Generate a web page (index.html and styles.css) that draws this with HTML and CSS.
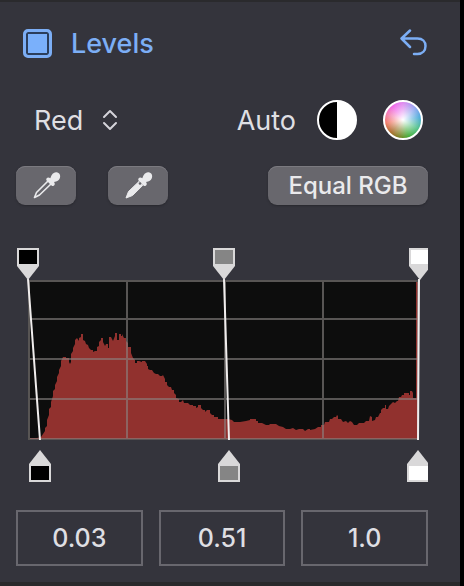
FILE: index.html
```
<!DOCTYPE html>
<html lang="en">
<head>
<meta charset="utf-8">
<title>Levels</title>
<link rel="stylesheet" href="styles.css">
</head>
<body>
<main class="panel">
  <header class="header">
    <label class="title"><input class="check" type="checkbox" checked>Levels</label>
    <button class="icon-button" type="button" aria-label="Reset">
      <svg width="28" height="28" viewBox="0 0 28 28" fill="none" stroke="#7caef5" stroke-width="2.5" stroke-linecap="round" stroke-linejoin="round"><path d="M10 1.500 1.500 9.500 10 18M2 9.500H17.500C22.500 9.500 25.500 12.500 25.500 17S22.500 25 17.500 25H14"/></svg>
    </button>
  </header>

  <div class="row channel-row">
    <div class="channel">
      <select class="channel-select" aria-label="Channel"><option>Red</option><option>Green</option><option>Blue</option></select>
      <svg class="chevrons" width="16" height="22" viewBox="0 0 16 22" fill="none" stroke="#d5d4da" stroke-width="2" stroke-linecap="round" stroke-linejoin="round"><path d="M2 8 8 2l6 6M2 14l6 6 6-6"/></svg>
    </div>
    <div class="auto">
      <span class="auto-label">Auto</span>
      <button class="disc contrast" type="button" aria-label="Auto contrast"></button>
      <button class="disc color" type="button" aria-label="Auto color"></button>
    </div>
  </div>

  <div class="row tools">
    <div class="pickers">
      <button class="button picker" type="button" aria-label="Pick black point">
        <svg width="30" height="30" viewBox="0 0 30 30"><path d="M17.500 9.500 5.500 21.500 3.500 26.500 8.500 24 20.500 12.500" fill="none" stroke="#eaeaec" stroke-width="1.600" stroke-linejoin="round"/><path d="M15.500 7.500c1-1.500 2.500-1.200 3.800-.3C20.500 3 23 .8 25.500 1.200c3 .3 4.500 3.300 3.300 6-.9 2.200-2.600 3-5.800 3.800 1 1.300 1.200 2.700-.3 3.700-1.200.8-2.200-.2-3-1l-3.200-3.200c-.9-.8-1.700-1.800-1-3z" fill="#eaeaec"/></svg>
      </button>
      <button class="button picker" type="button" aria-label="Pick white point">
        <svg width="30" height="30" viewBox="0 0 30 30"><path d="M16 10.500 5.500 20.500 3 27 9.500 24.500 19.800 14.300z" fill="#eaeaec" stroke="#eaeaec" stroke-linejoin="round"/><path d="M15.500 7.500c1-1.500 2.500-1.200 3.800-.3C20.500 3 23 .8 25.500 1.200c3 .3 4.500 3.300 3.300 6-.9 2.200-2.600 3-5.800 3.800 1 1.300 1.200 2.700-.3 3.700-1.200.8-2.200-.2-3-1l-3.200-3.200c-.9-.8-1.700-1.800-1-3z" fill="#eaeaec"/><circle cx="17" cy="12.500" r="1.300" fill="#66656b"/></svg>
      </button>
    </div>
    <button class="button equal" type="button">Equal RGB</button>
  </div>

  <svg class="histogram" viewBox="16 248 412 235" role="img" aria-label="Red channel histogram">
    <path fill="#0d0d0d" d="M28 280h391v160H28z"/>
    <path fill="#91312e" d="M30 439V438H37L41 437 43 434 45 431V428L47 426V420L49 415V409L51 407V402L53 396V391L55 389V385L57 381V377L59 373V370L61 366V361L63 357H66V358H69V362L70 364 71 362V354L73 351V348L75 344V340L77 338 79 341V338L81 337V334H83V340L85 341 86 344 88 345 89 348 91 350H93V352L95 351H97V347L99 346V342L101 340V338H103V342L105 346 106 344H108V348H109V337H111L113 341 115 336V333H117V340H119V334H121V336H122V334L124 338H126V341L128 343V347H131V353L133 358 135 360V363H137V361H139L142 362V361H145L147 364V366H148V369L150 370H152L154 373 156 374H158L160 376H162L163 375 165 379V382H167V385L169 387H171L172 390H174V393L176 395V398L179 399V402H181L183 400 184 403H188L190 405H193V406H196V408L198 407V405H201V408L203 410H205V412L207 410H210V413L212 415H214V417H218V419H228L232 420 234 422H240L246 421 250 420V419H256V421H258V423H262L266 425H269L270 424H276L279 426 283 427 286 429H290L293 428 296 430 299 429H303L305 431 308 429H310V430L315 429 318 427H321V425H324L325 422H329L330 419H332L334 417H336L337 415 338 416V419H341L343 422 346 421 348 423 350 421 352 422 354 425H357L359 423H364L366 421H369L370 416 372 417V421L375 420 376 417H378L380 413H381V410L383 408H385V405H386V409H388L389 406 393 402 395 403 397 401H398L399 397H401L402 395H404V393H409V395H410V391H412L413 393V398H416V282H419V439z"/>
    <path fill="none" stroke="#8b8583" stroke-opacity=".6" stroke-width="2" d="M29 440V281H418M127 281V439M225 281V439M323 281V439M418 281V439M29 319H418M29 359H418M29 399H418M28 439H419"/>
    <path fill="none" stroke="#f0eded" stroke-width="2" d="M28 279 40 440M224 279 229 440M419 279 418 440"/>
    <g fill="#d9d8d9">
      <path d="M17 248H39V266L28 280 17 266z"/><path d="M213 248H235V266L224 280 213 266z"/><path d="M409 248H431V266L420 280 409 266z"/>
      <path d="M29 482V464L40 450 51 464V482z"/><path d="M218 482V464L229 450 240 464V482z"/><path d="M407 482V464L418 450 429 464V482z"/>
    </g>
    <path fill="#000" d="M19 250h18v14H19zM31 466h18v14H31z"/>
    <path fill="#858585" d="M215 250h18v14h-18zM220 466h18v14h-18z"/>
    <path fill="#fff" d="M411 250h18v14h-18zM409 466h20v14h-20z"/>
  </svg>

  <div class="values">
    <input class="value" type="text" value="0.03" aria-label="Black point">
    <input class="value" type="text" value="0.51" aria-label="Midpoint">
    <input class="value" type="text" value="1.0" aria-label="White point">
  </div>
</main>
</body>
</html>
```
FILE: styles.css
```
* {
  box-sizing: border-box;
}

body {
  margin: 0;
  background: #000;
  color: #dfdfe3;
  font-family: Inter, "Liberation Sans", sans-serif;
  font-size: 27px;
}

button,
input,
select {
  margin: 0;
  padding: 0;
  border: 0;
  background: none;
  color: inherit;
  font: inherit;
}

svg {
  display: block;
}

.panel {
  margin-right: 4px;
  padding: 26px 32px 16px 16px;
  border-top: 2px solid #2a2a2d;
  border-bottom: 4px solid #29292b;
  background: #34343c;
}

.header,
.row,
.title,
.channel,
.auto,
.pickers {
  display: flex;
  align-items: center;
}

.header,
.row {
  justify-content: space-between;
}

.header {
  height: 30px;
  padding-left: 7px;
}

.title {
  gap: 19px;
  color: #7caef5;
  font-weight: 500;
}

.check {
  width: 29px;
  height: 29px;
  border: 3px solid #7caef5;
  border-radius: 5px;
  appearance: none;
}

.check:checked {
  background: #7ab0fb;
  box-shadow: inset 0 0 0 2px #2b3e5c;
}

.channel-row {
  height: 40px;
  margin-top: 42px;
  padding: 0 5px 0 18px;
}

.channel {
  gap: 16px;
}

.channel-select {
  width: 52px;
  appearance: none;
}

.auto-label {
  margin-right: 21px;
}

.disc {
  width: 40px;
  height: 40px;
  border: 2px solid #fff;
  border-radius: 50%;
}

.contrast {
  margin-right: 26px;
  background: linear-gradient(90deg, #000 50%, #fff 50%);
}

.color {
  background:
    radial-gradient(circle closest-side, #fff 0%, rgba(255, 255, 255, 0.5) 45%, transparent 95%),
    conic-gradient(#dc80ee, #8aa0ef 45deg, #3fa4d8 80deg, #45bd80 120deg, #35a82c 160deg, #6b7d14 190deg, #a5621d 225deg, #ee705c 260deg, #f373a7 290deg, #ee5ce8 325deg, #dc80ee);
  background-origin: border-box;
}

.tools {
  height: 39px;
  margin-top: 26px;
}

.pickers {
  gap: 32px;
}

.button {
  height: 39px;
  border-radius: 9px;
  background: #68676d;
  box-shadow: inset 0 1px 0 #7b7a80, 0 1px 2px #28282e;
  color: #eaeaec;
  font-size: 24px;
  font-weight: 500;
}

.picker {
  display: grid;
  place-items: center;
  width: 60px;
}

.equal {
  width: 160px;
}

.histogram {
  width: 100%;
  height: auto;
  margin-top: 43px;
}

.values {
  display: grid;
  grid-template-columns: repeat(3, 1fr);
  gap: 16px;
  margin-top: 27px;
}

.value {
  width: 100%;
  min-width: 0;
  height: 56px;
  border: 2px solid #68676e;
  font-size: 25px;
  font-weight: 500;
  text-align: center;
}
```
